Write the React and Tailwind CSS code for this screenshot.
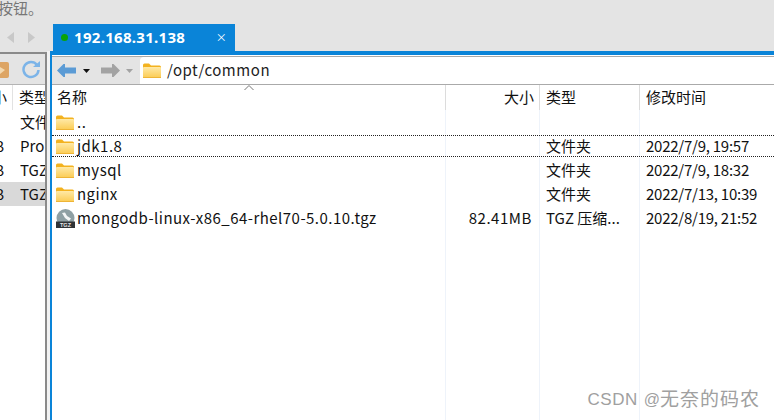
import "react";

const FONT = "font-['Noto_Sans_CJK_SC','Noto_Sans',sans-serif]";

const Folder = ({ className = "w-[18px] h-[15px]" }) => (
  <svg viewBox="0 0 18 15" className={className}>
    <defs>
      <linearGradient id="folderBody" x1="0" y1="0" x2="0" y2="1">
        <stop offset="0" stopColor="#ffe9a6" />
        <stop offset="1" stopColor="#fbcb52" />
      </linearGradient>
    </defs>
    <path d="M0 2 Q0 0.5 1.5 0.5 H6 L8 2.5 H16.5 Q18 2.5 18 4 V5 H0 Z" fill="#f3b21f" />
    <rect x="0" y="4" width="18" height="11" rx="1" fill="url(#folderBody)" />
    <rect x="0" y="14" width="18" height="1" fill="#eeb436" />
  </svg>
);

const TgzIcon = () => (
  <svg viewBox="0 0 19 19" className="h-[19px] w-[19px]">
    <circle cx="9.5" cy="9" r="9" fill="#8fa0a4" />
    <path d="M6 4 L9 3.5 L11 7 L15 9.5 L13 12 L9 9 Z" fill="#f4f6f6" />
    <rect x="0" y="12.5" width="19" height="6.5" fill="#2f3336" />
    <text x="9.5" y="18" textAnchor="middle" fontSize="5.5" fontWeight="700" fill="#e8e8e8" fontFamily="Liberation Sans">TGZ</text>
  </svg>
);

const Caret = ({ color }) => (
  <svg viewBox="0 0 7 4" className="h-1 w-[7px]">
    <path d="M0 0 H7 L3.5 4 Z" fill={color} />
  </svg>
);

const Arrow = ({ color, flip }) => (
  <svg viewBox="0 0 19 13" className={flip ? "h-[13px] w-[19px] -scale-x-100" : "h-[13px] w-[19px]"}>
    <path d="M0 6.5 L6.5 0 H8 V3.5 H19 V9.5 H8 V13 H6.5 Z" fill={color} />
  </svg>
);

const NavTriangle = ({ flip }) => (
  <svg viewBox="0 0 7 11" className="h-[11px] w-[7px]">
    <path d={flip ? "M0 0 L7 5.5 L0 11 Z" : "M7 0 L0 5.5 L7 11 Z"} fill="#c8c8c8" />
  </svg>
);

const files = [
  { name: "..", icon: "folder" },
  { name: "jdk1.8", icon: "folder", type: "文件夹", time: "2022/7/9, 19:57", focus: true },
  { name: "mysql", icon: "folder", type: "文件夹", time: "2022/7/9, 18:32" },
  { name: "nginx", icon: "folder", type: "文件夹", time: "2022/7/13, 10:39" },
  { name: "mongodb-linux-x86_64-rhel70-5.0.10.tgz", icon: "tgz", size: "82.41MB", type: "TGZ 压缩...", time: "2022/8/19, 21:52" },
];

const FileRow = ({ file }) => (
  <div className={file.focus
    ? "my-px flex h-[22px] items-center border-y border-dotted border-[#222] text-[15px] text-[#111]"
    : "flex h-6 items-center text-[15px] text-[#111]"}>
    <div className="flex w-[393px] items-center pl-1">
      {file.icon === "folder" ? <Folder /> : <TgzIcon />}
      <span className={file.icon === "folder" ? "ml-[3px] tracking-[0.47px] whitespace-nowrap" : "ml-[2px] tracking-[0.47px] whitespace-nowrap"}>{file.name}</span>
    </div>
    <div className="flex h-full w-[94px] items-center justify-end border-l border-[#eef3fa] pr-[7px] tracking-[0.55px]">{file.size}</div>
    <div className="flex h-full w-[100px] items-center border-l border-[#eef3fa] pl-1.5 whitespace-nowrap">{file.type}</div>
    <div className="flex h-full flex-1 items-center border-l border-[#eef3fa] pl-1.5 tracking-[-0.25px] whitespace-nowrap">{file.time}</div>
  </div>
);

const LeftPane = () => (
  <div className="mt-px flex w-[47px] flex-col border-t-2 border-r-2 border-[#8a8a8a] bg-white text-[15px] text-[#111]">
    <div className="flex h-[31px] items-center gap-3 overflow-hidden border-b border-[#b4b4b4] bg-[#e4e4e4]">
      <svg viewBox="0 0 9 17" className="h-[17px] w-[9px] shrink-0">
        <path d="M0 1 H7 Q9 1 9 3 V15 Q9 17 7 17 H0 Z" fill="#dda565" />
        <path d="M0 6 L5 9 L0 13 Z" fill="#f3d9b0" />
      </svg>
      <svg viewBox="0 0 20 20" className="h-5 w-5 shrink-0">
        <path d="M16 6 A7.5 7.5 0 1 0 17.5 11" fill="none" stroke="#7cb4e8" strokeWidth="2.5" />
        <path d="M12 8 H19 V2 Z" fill="#7cb4e8" />
      </svg>
    </div>
    <div className="flex h-[25px] items-center">
      <div className="flex w-[8px] justify-end overflow-hidden"><span className="shrink-0">小</span></div>
      <span className="ml-[5px] h-full border-l border-[#e2e2e2]" />
      <span className="ml-1.5 overflow-hidden whitespace-nowrap">类型</span>
    </div>
    {[
      ["", "文件"],
      ["B", "Pro"],
      ["B", "TGZ"],
      ["B", "TGZ"],
    ].map(([size, type], i) => (
      <div key={i} className={i === 3 ? "flex h-6 items-center bg-[#d9d9d9]" : "flex h-6 items-center"}>
        <div className="flex w-1 justify-end overflow-hidden"><span className="shrink-0">{size}</span></div>
        <span className="ml-4 w-[25px] overflow-hidden whitespace-nowrap">{type}</span>
      </div>
    ))}
  </div>
);

const RightPane = () => (
  <div className="flex flex-1 flex-col border-l-[2px] border-[#0a84d8] bg-white">
    <div className="h-1 bg-[#0a84d8]" />
    <div className="h-px bg-white" />
    <div className="h-px bg-[#a9a9a9]" />
    <div className="flex h-[28px] items-center border-b border-[#aaaaaa] bg-[#e4e4e4]">
      <div className="flex w-[88px] items-center pl-[5px]">
        <Arrow color="#5b9bd5" />
        <span className="ml-[7px]"><Caret color="#111" /></span>
        <span className="ml-[11px]"><Arrow color="#a3a3a3" flip /></span>
        <span className="ml-[6px]"><Caret color="#a3a3a3" /></span>
      </div>
      <div className="flex h-full flex-1 items-center rounded-tl-sm bg-white pl-[3px] text-[15px] tracking-[0.55px] text-[#222]">
        <Folder />
        <span className="ml-[6px]">/opt/common</span>
      </div>
    </div>
    <div className="relative flex h-[25px] items-center text-[15px] text-[#111]">
      <div className="w-[393px] pl-[5px]">名称</div>
      <div className="flex h-full w-[94px] items-center justify-end border-l border-[#dcdcdc] pr-[5px]">大小</div>
      <div className="flex h-full w-[100px] items-center border-l border-[#dcdcdc] pl-1.5">类型</div>
      <div className="flex h-full flex-1 items-center border-l border-[#dcdcdc] pl-1.5">修改时间</div>
      <svg viewBox="0 0 10 5" className="absolute left-[192px] top-0 h-[5px] w-2.5">
        <path d="M0.5 5 L5 0.5 L9.5 5" fill="none" stroke="#777" />
      </svg>
    </div>
    {files.map((file) => <FileRow key={file.name} file={file} />)}
    <div className="flex flex-1">
      <div className="w-[393px]" />
      <div className="w-[94px] border-l border-[#eef3fa]" />
      <div className="w-[100px] border-l border-[#eef3fa]" />
      <div className="flex-1 border-l border-[#eef3fa]" />
    </div>
  </div>
);

export default function App() {
  return (
    <div className={`relative flex h-[420px] w-[774px] flex-col overflow-hidden bg-[#e4e4e4] ${FONT}`}>
      <div className="-ml-[2px] h-6 text-[15px] leading-[16px] text-[#777]">按钮。</div>
      <div className="flex h-[27px] items-stretch">
        <div className="flex w-[53px] items-center gap-[14px] pl-[7px]">
          <NavTriangle />
          <NavTriangle flip />
        </div>
        <div className="flex w-[182px] items-center bg-[#0a84d8] pl-2 text-[15px] font-bold tracking-[0.3px] text-white">
          <span className="h-[7px] w-[7px] rounded-full bg-[#0aa30a]" />
          <span className="ml-1.5 flex-1 font-['Noto_Sans']">192.168.31.138</span>
          <span className="mr-2 text-[11px] font-normal">×</span>
        </div>
      </div>
      <div className="flex min-h-0 flex-1">
        <LeftPane />
        <div className="w-[3px] bg-[#f2f2f2]" />
        <RightPane />
      </div>
      <div className="absolute bottom-[6px] right-[14px] flex items-center text-[17px] whitespace-nowrap text-[#a0a0a0] font-['Liberation_Sans','Noto_Sans_CJK_SC',sans-serif]">
        <span className="tracking-[0.5px]">CSDN</span>
        <span className="ml-[6px] text-[16px]">@</span>
        <span className="text-[19px] tracking-[1px]">无奈的码农</span>
      </div>
    </div>
  );
}
